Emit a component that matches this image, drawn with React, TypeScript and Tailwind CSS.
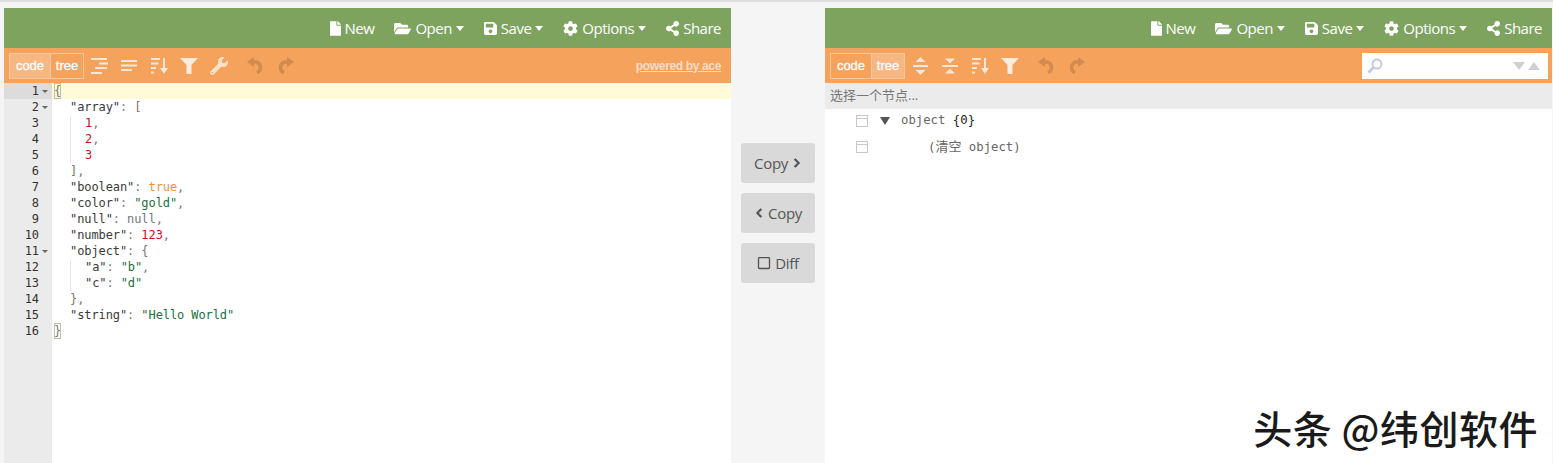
import type { ReactNode } from 'react';
import { FaChevronLeft, FaChevronRight, FaCog, FaFile, FaFolderOpen, FaRegSquare, FaSave, FaShareAlt, FaWrench } from 'react-icons/fa';

type Token = [string, string];

const KEY = 'text-[#3a3a3a]';
const PUNC = 'text-[#777777]';
const NUM = 'text-[#cc0f1f]';
const STR = 'text-[#1a7040]';
const BOOL = 'text-[#ee8f45]';
const NUL = 'text-[#777777]';

const lines: { indent: number; guide?: boolean; fold?: boolean; tokens: Token[] }[] = [
  { indent: 0, fold: true, tokens: [['{', PUNC]] },
  { indent: 1, fold: true, tokens: [['"array"', KEY], [': [', PUNC]] },
  { indent: 2, guide: true, tokens: [['1', NUM], [',', PUNC]] },
  { indent: 2, guide: true, tokens: [['2', NUM], [',', PUNC]] },
  { indent: 2, guide: true, tokens: [['3', NUM]] },
  { indent: 1, tokens: [['],', PUNC]] },
  { indent: 1, tokens: [['"boolean"', KEY], [': ', PUNC], ['true', BOOL], [',', PUNC]] },
  { indent: 1, tokens: [['"color"', KEY], [': ', PUNC], ['"gold"', STR], [',', PUNC]] },
  { indent: 1, tokens: [['"null"', KEY], [': ', PUNC], ['null', NUL], [',', PUNC]] },
  { indent: 1, tokens: [['"number"', KEY], [': ', PUNC], ['123', NUM], [',', PUNC]] },
  { indent: 1, fold: true, tokens: [['"object"', KEY], [': {', PUNC]] },
  { indent: 2, guide: true, tokens: [['"a"', KEY], [': ', PUNC], ['"b"', STR], [',', PUNC]] },
  { indent: 2, guide: true, tokens: [['"c"', KEY], [': ', PUNC], ['"d"', STR]] },
  { indent: 1, tokens: [['},', PUNC]] },
  { indent: 1, tokens: [['"string"', KEY], [': ', PUNC], ['"Hello World"', STR]] },
  { indent: 0, tokens: [['}', PUNC]] },
];

const FormatIcon = () => (
  <svg width="17" height="16" viewBox="0 0 17 16" fill="#fff" opacity="0.75">
    <rect x="0" y="0" width="16" height="2" />
    <rect x="8" y="4.500" width="9" height="2" />
    <rect x="4" y="9" width="12" height="2" />
    <rect x="0" y="14" width="11" height="2" />
  </svg>
);

const CompactIcon = () => (
  <svg width="16" height="11" viewBox="0 0 16 11" fill="#fff" opacity="0.75">
    <rect x="0" y="0" width="16" height="2" />
    <rect x="0" y="4.500" width="16" height="2" />
    <rect x="0" y="9" width="11" height="2" />
  </svg>
);

const SortIcon = () => (
  <svg width="17" height="16" viewBox="0 0 17 16" fill="#fff" opacity="0.75">
    <rect x="0" y="0" width="9" height="2" />
    <rect x="0" y="4.500" width="7.500" height="2" />
    <rect x="0" y="9" width="5" height="2" />
    <rect x="0" y="13.500" width="3" height="2" />
    <path d="M12 0h2v10h3l-4 6-4-6h3z" />
  </svg>
);

const FilterIcon = () => (
  <svg width="18" height="16" viewBox="0 0 18 16" fill="#fff" opacity="0.8">
    <path d="M0 0h18l-6.500 7v9h-5V7z" />
  </svg>
);

const Arc = ({ flip }: { flip?: boolean }) => (
  <svg width="17" height="17" viewBox="0 0 17 17" fill="none" stroke="#d28b4e" strokeWidth="3.500" className={flip ? '-scale-x-100' : ''}>
    <path d="M5 5h4a5.500 5.500 0 0 1 1 10.500" />
    <path d="M0 5l7-5v10z" fill="#d28b4e" stroke="none" />
  </svg>
);

const ExpandIcon = () => (
  <svg width="15" height="18" viewBox="0 0 15 18" fill="#fff" opacity="0.75">
    <path d="M7.500 0l5 5h-10zM7.500 18l-5-5h10z" />
    <rect x="0" y="8" width="15" height="2" />
  </svg>
);

const CollapseIcon = () => (
  <svg width="16" height="18" viewBox="0 0 16 18" fill="#fff" opacity="0.75">
    <path d="M8 6.500l-5-5h10zM8 11.500l5 5H3z" />
    <rect x="0" y="8" width="16" height="2" />
  </svg>
);

const Slot = ({ children }: { children: ReactNode }) => (
  <span className="flex w-[30px] items-center justify-center">{children}</span>
);

const Caret = () => <span className="h-0 border-x-[4.5px] border-t-[5px] border-x-transparent border-t-white" />;

const MenuItem = ({ children }: { children: ReactNode }) => <span className="flex items-center gap-1">{children}</span>;

const MenuBar = () => (
  <div className="flex h-10 items-center justify-end gap-5 bg-[#7ea35f] pr-2.5 text-[15px] tracking-[-0.5px] text-white">
    <MenuItem><FaFile className="h-[15px] w-[11px]" />New</MenuItem>
    <MenuItem><FaFolderOpen className="h-[15px] w-[17px]" />Open<Caret /></MenuItem>
    <MenuItem><FaSave className="h-[15px] w-[13px]" />Save<Caret /></MenuItem>
    <MenuItem><FaCog className="h-[15px] w-[15px]" />Options<Caret /></MenuItem>
    <MenuItem><FaShareAlt className="h-[15px] w-[13px]" />Share</MenuItem>
  </div>
);

const ModeSwitch = ({ active }: { active: 'code' | 'tree' }) => (
  <div className="flex h-[26px] border border-[#fbc89c] text-[13px] text-white [-webkit-text-stroke:0.3px_#fff] [font-family:'Liberation_Sans',sans-serif]">
    <span className={`flex w-10 items-center justify-center ${active === 'code' ? 'bg-[#f7b783]' : ''}`}>code</span>
    <span className={`flex w-[33px] items-center justify-center border-l border-[#fbc89c] ${active === 'tree' ? 'bg-[#f7b783]' : ''}`}>tree</span>
  </div>
);

const Editor = () => (
  <div className="flex flex-1 bg-white">
    <div className="w-12 bg-[#ebebeb] text-[#333333]">
      {lines.map((line, i) => (
        <div key={i} className={`relative h-4 pr-[13px] text-right leading-4 ${i === 0 ? 'bg-[#dcdcdc]' : ''}`}>
          {i + 1}
          {line.fold && <span className="absolute right-1 top-[7px] border-x-[3px] border-t-[3px] border-x-transparent border-t-[#666666]" />}
        </div>
      ))}
    </div>
    <div className="flex-1">
      {lines.map((line, i) => (
        <div key={i} className={`flex h-4 whitespace-pre pl-0.5 leading-4 ${i === 0 ? 'bg-[#fffbd9]' : ''}`}>
          {line.indent > 0 && <span className="w-4 shrink-0" />}
          {line.indent > 1 && <span className={`w-[15px] shrink-0 ${line.guide ? 'border-l border-[#e5e5e5]' : ''}`} />}
          {line.tokens.map(([text, color], j) => (
            <span key={j} className={`${color} ${i === 0 || i === 15 ? 'outline outline-[#c0c0b0] -outline-offset-1' : ''}`}>{text}</span>
          ))}
        </div>
      ))}
    </div>
  </div>
);

const MiddleButton = ({ children }: { children: ReactNode }) => (
  <div className="flex h-10 w-[74px] items-center justify-center gap-1 rounded-[3px] bg-[#d9d9d9] text-[15px] tracking-[-0.3px] text-[#555555]">
    {children}
  </div>
);

const NodeMenu = () => (
  <span className="block h-3 w-3 border border-[#c8c8c8] bg-white">
    <span className="block h-[3px] border-b border-[#c8c8c8]" />
  </span>
);

const TreeView = () => (
  <div className="flex-1 bg-white">
    <div className="flex h-[26px] items-center bg-[#ebebeb] pl-[5px] text-[13px] text-[#777777] [font-family:'Open_Sans','Noto_Sans_CJK_SC',sans-serif]">选择一个节点...</div>
    <div className="flex h-[23px] items-center pl-[31px] text-[#666666]">
      <NodeMenu />
      <span className="ml-3 h-0 border-x-[5px] border-t-[8px] border-x-transparent border-t-[#555555]" />
      <span className="ml-[11px]">object <span className="text-[#222222]">{'{0}'}</span></span>
    </div>
    <div className="flex h-[27px] items-center pl-[31px] pt-[3px] text-[#666666]">
      <NodeMenu />
      <span className="ml-[60px]">(<span className="text-[13px]">清空</span> object)</span>
    </div>
  </div>
);

export default function App() {
  return (
    <div className="relative h-[463px] w-[1553px] overflow-hidden bg-[#f5f5f5] [font-family:'Open_Sans',sans-serif]">
      <div className="h-0.5 bg-[#dedede]" />
      <div className="flex pl-1 pt-1.5">
        <div className="flex h-[455px] w-[727px] flex-col">
          <MenuBar />
          <div className="flex h-[35px] items-center bg-[#f5a25c] pl-[5px]">
            <ModeSwitch active="code" />
            <Slot><FormatIcon /></Slot>
            <Slot><CompactIcon /></Slot>
            <Slot><SortIcon /></Slot>
            <Slot><FilterIcon /></Slot>
            <Slot><FaWrench className="h-[18px] w-[18px] text-[#fde0c8]" /></Slot>
            <span className="w-1.5" />
            <Slot><Arc /></Slot>
            <Slot><Arc flip /></Slot>
            <span className="ml-auto pr-2.5 text-xs font-bold tracking-[-0.35px] text-[#fbdcc1] underline [font-family:'Liberation_Sans',sans-serif]">powered by ace</span>
          </div>
          <div className="flex flex-1 text-[12px] tracking-[-0.09px] [font-family:'DejaVu_Sans_Mono',monospace]">
            <Editor />
          </div>
        </div>
        <div className="flex w-[94px] flex-col items-center gap-2.5 pt-[135px]">
          <MiddleButton>Copy<FaChevronRight size={10} stroke="currentColor" strokeWidth={40} /></MiddleButton>
          <MiddleButton><FaChevronLeft size={10} stroke="currentColor" strokeWidth={40} />Copy</MiddleButton>
          <MiddleButton><FaRegSquare size={14} />Diff</MiddleButton>
        </div>
        <div className="flex h-[455px] w-[727px] flex-col">
          <MenuBar />
          <div className="flex h-[35px] items-center bg-[#f5a25c] pl-[5px]">
            <ModeSwitch active="tree" />
            <Slot><ExpandIcon /></Slot>
            <Slot><CollapseIcon /></Slot>
            <Slot><SortIcon /></Slot>
            <Slot><FilterIcon /></Slot>
            <span className="w-1.5" />
            <Slot><Arc /></Slot>
            <Slot><Arc flip /></Slot>
            <div className="ml-auto mr-1 flex h-[26px] w-[186px] items-center justify-between bg-white pl-[5px] pr-2">
              <svg width="16" height="16" viewBox="0 0 16 16" fill="none" stroke="#c4cbdc" strokeWidth="2">
                <circle cx="10" cy="6" r="4.500" />
                <path d="M6.500 9.500l-5 5" strokeWidth="3" />
              </svg>
              <span className="flex gap-[3px]">
                <span className="border-x-[6px] border-t-[8px] border-x-transparent border-t-[#cfcfd6]" />
                <span className="border-x-[6px] border-b-[8px] border-x-transparent border-b-[#cfcfd6]" />
              </span>
            </div>
          </div>
          <div className="flex flex-1 text-[12.3px] [font-family:'DejaVu_Sans_Mono','Noto_Sans_CJK_SC',monospace]">
            <TreeView />
          </div>
        </div>
      </div>
      <div className="absolute bottom-[16px] right-[15px] text-[39px] font-medium leading-none tracking-[0.5px] text-[#1a1a1a] [font-family:'Noto_Sans_CJK_SC','Liberation_Sans',sans-serif]">头条 @纬创软件</div>
    </div>
  );
}
